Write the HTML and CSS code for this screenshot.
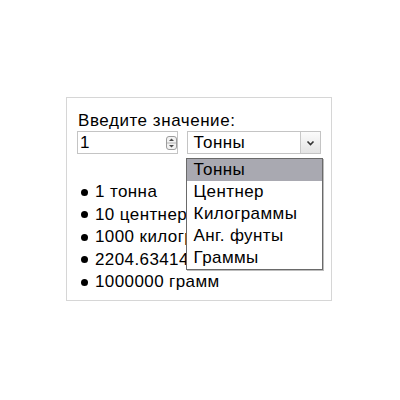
FILE: index.html
```html
<!DOCTYPE html>
<html>
<head>
<meta charset="utf-8">
<link rel="stylesheet" href="styles.css">
</head>
<body>
<div class="box">
  <div class="label">Введите значение:</div>
  <div class="row">
    <div class="num">
      <span class="num-val">1</span>
      <span class="spin">
        <svg width="11" height="14" viewBox="0 0 11 14">
          <rect x="0.5" y="0.5" width="10" height="13" rx="2.5" fill="#f2f2f2" stroke="#9c9c9c"/>
          <line x1="1" y1="7" x2="10" y2="7" stroke="#b4b4b4"/>
          <path d="M3 5 L5.5 2.5 L8 5 Z" fill="#4a4a4a"/>
          <path d="M3 9 L5.5 11.5 L8 9 Z" fill="#4a4a4a"/>
        </svg>
      </span>
    </div>
    <div class="sel">
      <span class="sel-val">Тонны</span>
      <span class="sel-btn">
        <svg width="9" height="6" viewBox="0 0 9 6">
          <path d="M1.5 1.5 L4.5 4.5 L7.5 1.5" fill="none" stroke="#333" stroke-width="1.6"/>
        </svg>
      </span>
      <ul class="menu">
        <li class="active">Тонны</li>
        <li>Центнер</li>
        <li>Килограммы</li>
        <li>Анг. фунты</li>
        <li>Граммы</li>
      </ul>
    </div>
  </div>
  <ul class="results">
    <li>1 тонна</li>
    <li>10 центнеров</li>
    <li>1000 килограмм</li>
    <li>2204.63414 фунтов</li>
    <li>1000000 грамм</li>
  </ul>
</div>
</body>
</html>
```
FILE: styles.css
```css
html, body {
  margin: 0;
  padding: 0;
  background: #ffffff;
}
body {
  font-family: "Liberation Sans", Arial, sans-serif;
  font-size: 17px;
  letter-spacing: 0.4px;
  color: #000;
}
.box {
  margin: 97px 0 0 66px;
  width: 244px;
  height: 188px;
  padding: 14px 10px 0 10px;
  border: 1px solid #d6d6d6;
}
.label {
  line-height: 18px;
  padding-left: 1px;
  letter-spacing: 0.55px;
}
.row {
  display: flex;
  gap: 9px;
  margin-top: 1px;
}
.num {
  box-sizing: border-box;
  width: 101px;
  height: 23px;
  border: 1px solid #c4c4c4;
  display: flex;
  align-items: center;
  justify-content: space-between;
  padding: 0 0 0 2px;
}
.num-val {
  line-height: 20px;
}
.spin {
  display: flex;
}
.spin svg {
  display: block;
}
.sel {
  position: relative;
  box-sizing: border-box;
  width: 135px;
  height: 23px;
  border: 1px solid #c4c4c4;
  display: flex;
  align-items: stretch;
  justify-content: space-between;
}
.sel-val {
  line-height: 21px;
  padding-left: 6px;
}
.sel-btn {
  width: 19px;
  border-left: 1px solid #c8c8c8;
  background: linear-gradient(#fbfbfb, #e4e4e4);
  display: flex;
  align-items: center;
  justify-content: center;
}
.sel-btn svg {
  display: block;
}
.menu {
  position: absolute;
  top: 26px;
  left: -2px;
  width: 135px;
  margin: 0;
  padding: 0;
  list-style: none;
  background: #fff;
  border: 1px solid #6a6a6a;
  box-shadow: 1px 1px 0 #bdbdbd;
  z-index: 2;
}
.menu li {
  line-height: 22px;
  padding-left: 7px;
}
.menu li.active {
  background: #a9a9b1;
}
.results {
  margin: 27px 0 0 0;
  padding: 0;
  list-style: none;
}
.results li {
  line-height: 22.5px;
  white-space: nowrap;
  display: flex;
  align-items: center;
}
.results li::before {
  content: "";
  flex: none;
  width: 7px;
  height: 7px;
  border-radius: 50%;
  background: #000;
  margin: 0 7px 0 4px;
}
```
